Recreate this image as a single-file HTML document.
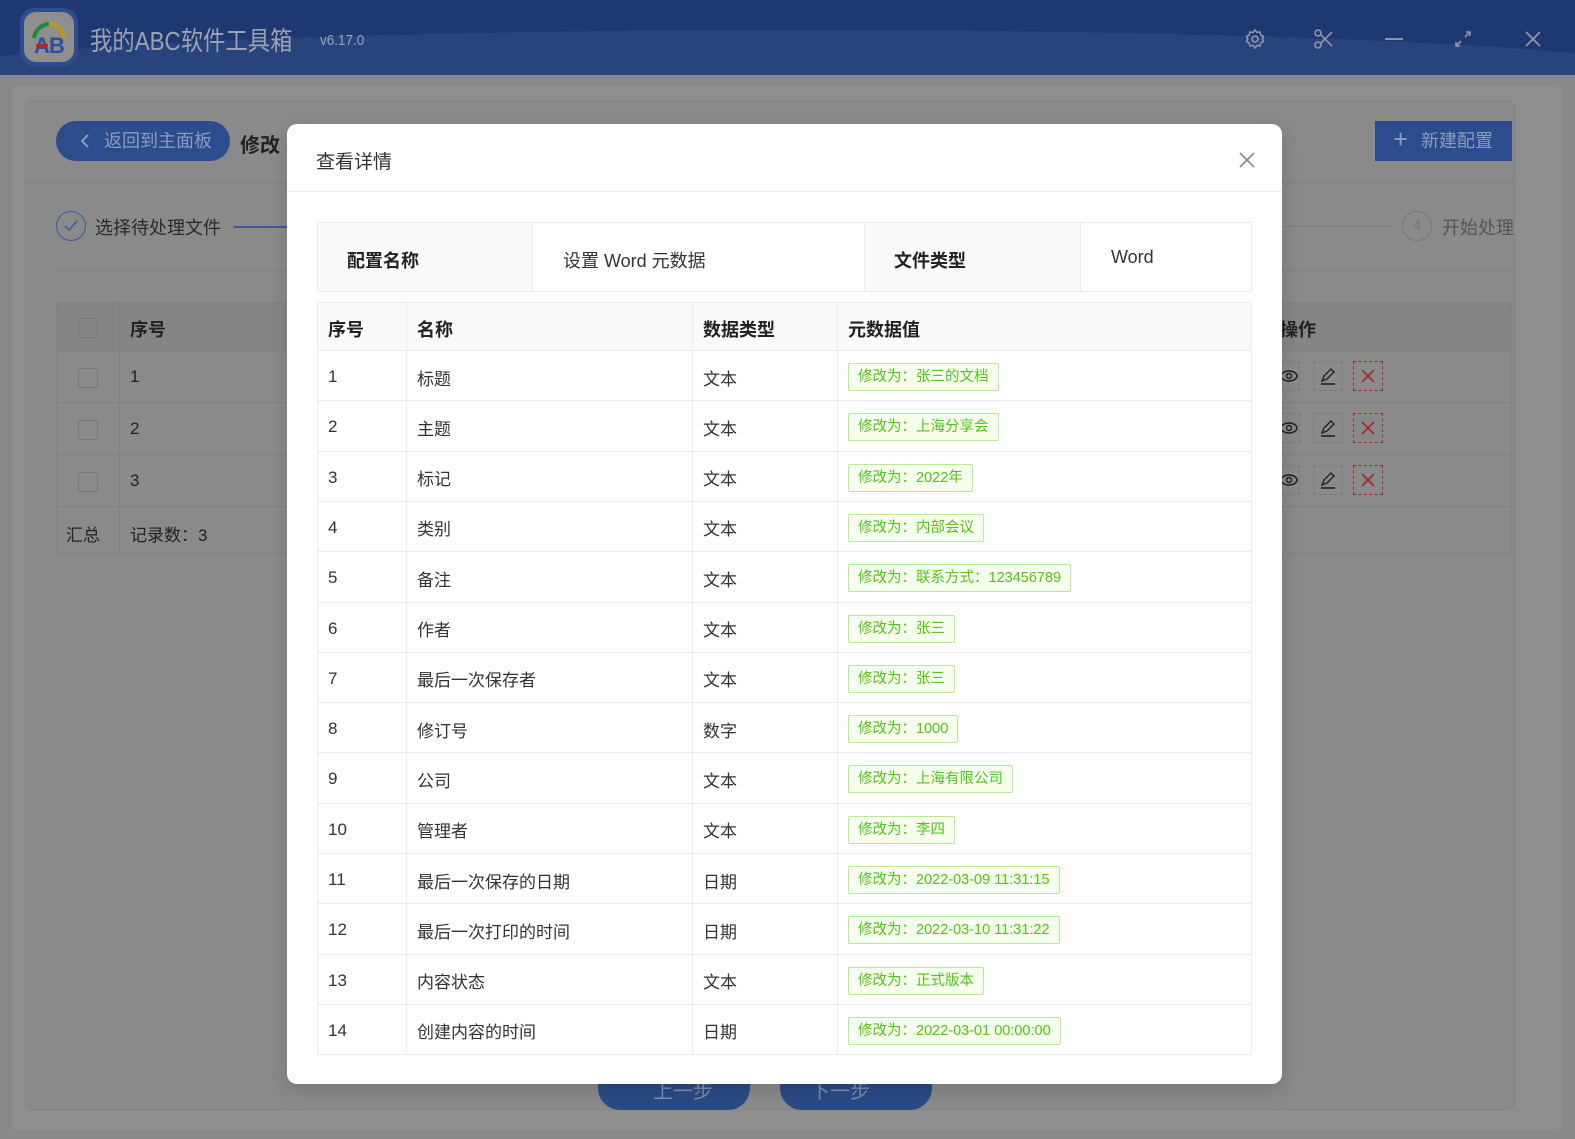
<!DOCTYPE html>
<html><head><meta charset="utf-8">
<style>
*{margin:0;padding:0;box-sizing:border-box}
body{width:1575px;height:1139px;overflow:hidden;background:#898989;font-family:"Liberation Sans","Noto Sans CJK SC",sans-serif;position:relative;color:#333}
.abs{position:absolute}
.top{left:0;top:0;width:1575px;height:75px;background:#1f3872;overflow:hidden}
.wave{left:-50px;top:30px;width:1700px;height:120px;background:#29447d;border-radius:50%/40px}
.t{white-space:nowrap}
.row{position:absolute;left:318px;width:934px;height:51px;border-top:1px solid #ececec}
.cell{position:absolute;top:0;height:100%;display:flex;align-items:center;font-size:17px;color:#333;padding-left:10px;padding-top:2px}
.tag{display:inline-block;height:28px;line-height:27px;padding:0 9px;border:1px solid #b7eb8f;background:#f6ffed;color:#52c41a;font-size:14.5px;border-radius:2px;white-space:nowrap}
.vl{position:absolute;top:302px;height:752px;width:1px;background:#ececec}
</style></head><body>
<div class="abs top">
  <div class="abs wave"></div>
  <div class="abs" style="left:20px;top:8px;width:58px;height:58px;border-radius:14px;background:#2e4d8f"></div>
  <div class="abs" style="left:24px;top:12px;width:50px;height:50px;border-radius:12px;background:#8e8e8e"></div>
  <svg class="abs" style="left:24px;top:12px" width="50" height="50" viewBox="0 0 50 50">
    <path d="M10 26 A16 16 0 0 1 25 12" stroke="#1e8a3a" stroke-width="4" fill="none"/>
    <path d="M25 12 A16 16 0 0 1 40 26" stroke="#b89a1a" stroke-width="4" fill="none"/>
    <text x="10" y="41" font-size="22" font-family="Liberation Sans" fill="#2850a0" font-weight="bold">A</text>
    <text x="25" y="41" font-size="22" font-family="Liberation Sans" fill="#2850a0" font-weight="bold">B</text>
    <rect x="12" y="32" width="12" height="3" fill="#b02828"/>
  </svg>
  <div class="abs t" style="left:90px;top:21px;font-size:26px;color:#9aa3b4;transform:scaleX(0.86);transform-origin:0 0">我的ABC软件工具箱</div>
  <div class="abs t" style="left:320px;top:32px;font-size:15px;color:#9aa3b4;transform:scaleX(0.9);transform-origin:0 0">v6.17.0</div>
  <svg class="abs" style="left:1243px;top:27px" width="24" height="24" viewBox="0 0 24 24" fill="none" stroke="#8d96a8" stroke-width="1.6"><path d="M12 3l2 2.5 3-.5.8 3 2.7 1.5-1.2 2.5 1.2 2.5-2.7 1.5-.8 3-3-.5L12 21l-2-2.5-3 .5-.8-3L3.5 14.5 4.7 12 3.5 9.5 6.2 8 7 5l3 .5z"/><circle cx="12" cy="12" r="3"/></svg>
  <svg class="abs" style="left:1313px;top:28px" width="22" height="22" viewBox="0 0 22 22" fill="none" stroke="#8d96a8" stroke-width="1.6"><circle cx="5" cy="5" r="3"/><circle cx="5" cy="17" r="3"/><path d="M7.5 6.5L19 18M7.5 15.5L19 4"/></svg>
  <div class="abs" style="left:1385px;top:38px;width:18px;height:2px;background:#8d96a8"></div>
  <svg class="abs" style="left:1453px;top:29px" width="20" height="20" viewBox="0 0 20 20" fill="none" stroke="#8d96a8" stroke-width="1.6"><path d="M3 17L8 12M12 8L17 3M13 3h4v4M3 13v4h4"/></svg>
  <svg class="abs" style="left:1523px;top:29px" width="20" height="20" viewBox="0 0 20 20" stroke="#8d96a8" stroke-width="1.8"><path d="M3 3L17 17M17 3L3 17"/></svg>
</div>

<div class="abs" style="left:12px;top:86px;width:1550px;height:1044px;background:#8e8e8e;border-radius:6px"></div>
<div class="abs" style="left:25px;top:100px;width:1490px;height:1010px;background:#8a8a8a;border:1px solid #848484;border-radius:8px"></div>
<div class="abs" style="left:25px;top:182px;width:1490px;height:1px;background:#808080"></div>
<div class="abs t" style="left:56px;top:121px;width:174px;height:40px;border-radius:20px;background:#2c4c8e;color:#8b9ac0;font-size:18px;line-height:40px;padding-left:48px">返回到主面板</div>
<svg class="abs" style="left:78px;top:133px" width="14" height="16"><path d="M10 2L4 8l6 6" stroke="#8b9ac0" stroke-width="2" fill="none"/></svg>
<div class="abs t" style="left:240px;top:129px;font-size:20px;font-weight:bold;color:#222">修改</div>
<div class="abs t" style="left:1375px;top:121px;width:137px;height:40px;background:#2c4c8e;color:#8b9ac0;font-size:18px;line-height:40px;padding-left:46px">新建配置</div>
<div class="abs t" style="left:1393px;top:124px;font-size:26px;color:#8b9ac0">+</div>
<div class="abs" style="left:56px;top:211px;width:30px;height:30px;border:1.5px solid #3a5aa0;border-radius:50%"></div>
<svg class="abs" style="left:62px;top:218px" width="18" height="16"><path d="M3 8l4 4 8-9" stroke="#3a5aa0" stroke-width="1.5" fill="none"/></svg>
<div class="abs t" style="left:95px;top:214px;font-size:18px;color:#2a2a2a">选择待处理文件</div>
<div class="abs" style="left:234px;top:226px;width:55px;height:2px;background:#3a5aa0"></div>
<div class="abs" style="left:1282px;top:226px;width:112px;height:1px;background:#7d7d7d"></div>
<div class="abs" style="left:1402px;top:211px;width:30px;height:30px;border:1.5px solid #777;border-radius:50%;color:#777;text-align:center;line-height:27px;font-size:15px">4</div>
<div class="abs t" style="left:1442px;top:214px;font-size:18px;color:#555">开始处理</div>
<div class="abs" style="left:56px;top:270px;width:1456px;height:1px;background:#808080"></div>
<div class="abs" style="left:56px;top:302px;width:1456px;height:252px;border:1px solid #828282;border-radius:4px"></div>
<div class="abs" style="left:57px;top:303px;width:1454px;height:47px;background:#858585"></div>
<div class="abs" style="left:56px;top:350px;width:1456px;height:1px;background:#808080"></div>
<div class="abs" style="left:56px;top:402px;width:1456px;height:1px;background:#808080"></div>
<div class="abs" style="left:56px;top:454px;width:1456px;height:1px;background:#808080"></div>
<div class="abs" style="left:56px;top:506px;width:1456px;height:1px;background:#808080"></div>
<div class="abs" style="left:119px;top:302px;width:1px;height:252px;background:#808080"></div>
<div class="abs" style="left:78px;top:318px;width:20px;height:20px;border:1px solid #777;border-radius:2px"></div>
<div class="abs" style="left:78px;top:368px;width:20px;height:20px;border:1px solid #777;border-radius:2px"></div>
<div class="abs" style="left:78px;top:420px;width:20px;height:20px;border:1px solid #777;border-radius:2px"></div>
<div class="abs" style="left:78px;top:472px;width:20px;height:20px;border:1px solid #777;border-radius:2px"></div>
<div class="abs t" style="left:130px;top:316px;font-size:18px;font-weight:bold;color:#222">序号</div>
<div class="abs t" style="left:130px;top:367px;font-size:17px;color:#222">1</div>
<div class="abs t" style="left:130px;top:419px;font-size:17px;color:#222">2</div>
<div class="abs t" style="left:130px;top:471px;font-size:17px;color:#222">3</div>
<div class="abs t" style="left:66px;top:521px;font-size:17px;color:#222">汇总</div>
<div class="abs t" style="left:130px;top:521px;font-size:17px;color:#222">记录数：3</div>
<div class="abs t" style="left:1280px;top:316px;font-size:18px;font-weight:bold;color:#222">操作</div>
<div id="ops"></div>
<div class="abs t" style="left:598px;top:1055px;width:152px;height:55px;border-radius:0 0 22px 22px;background:#2b4a85;color:#7d8cb0;font-size:20px;padding:20px 0 0 55px">上一步</div>
<div class="abs t" style="left:780px;top:1055px;width:152px;height:55px;border-radius:0 0 22px 22px;background:#2b4a85;color:#7d8cb0;font-size:20px;padding:20px 0 0 30px">下一步</div>

<div class="abs" style="left:287px;top:124px;width:995px;height:960px;background:#fff;border-radius:10px;box-shadow:0 6px 20px rgba(0,0,0,.15)"></div>
<div class="abs t" style="left:316px;top:147px;font-size:19px;color:#333">查看详情</div>
<svg class="abs" style="left:1238px;top:151px" width="18" height="18"><path d="M2 2L16 16M16 2L2 16" stroke="#888" stroke-width="1.6"/></svg>
<div class="abs" style="left:287px;top:191px;width:995px;height:1px;background:#ececec"></div>

<div class="abs" style="left:317px;top:222px;width:935px;height:70px;border:1px solid #ececec"></div>
<div class="abs" style="left:318px;top:223px;width:215px;height:68px;background:#fafafa;border-right:1px solid #ececec"></div>
<div class="abs" style="left:864px;top:223px;width:217px;height:68px;background:#fafafa;border-left:1px solid #ececec;border-right:1px solid #ececec"></div>
<div class="abs t" style="left:347px;top:247px;font-size:18px;font-weight:bold;color:#222">配置名称</div>
<div class="abs t" style="left:563px;top:247px;font-size:18px;color:#333">设置 Word 元数据</div>
<div class="abs t" style="left:894px;top:247px;font-size:18px;font-weight:bold;color:#222">文件类型</div>
<div class="abs t" style="left:1111px;top:247px;font-size:18px;color:#333">Word</div>

<div class="abs" style="left:317px;top:302px;width:935px;height:753px;border:1px solid #ececec"></div>
<div class="abs" style="left:318px;top:303px;width:933px;height:47px;background:#fafafa"></div>
<div class="vl" style="left:406px"></div>
<div class="vl" style="left:692px"></div>
<div class="vl" style="left:837px"></div>
<div class="abs t" style="left:328px;top:316px;font-size:18px;font-weight:bold;color:#222">序号</div>
<div class="abs t" style="left:417px;top:316px;font-size:18px;font-weight:bold;color:#222">名称</div>
<div class="abs t" style="left:703px;top:316px;font-size:18px;font-weight:bold;color:#222">数据类型</div>
<div class="abs t" style="left:848px;top:316px;font-size:18px;font-weight:bold;color:#222">元数据值</div>
<div id="rows"></div>
<script>
var d=[["标题","文本","张三的文档"],["主题","文本","上海分享会"],["标记","文本","2022年"],["类别","文本","内部会议"],["备注","文本","联系方式：123456789"],["作者","文本","张三"],["最后一次保存者","文本","张三"],["修订号","数字","1000"],["公司","文本","上海有限公司"],["管理者","文本","李四"],["最后一次保存的日期","日期","2022-03-09 11:31:15"],["最后一次打印的时间","日期","2022-03-10 11:31:22"],["内容状态","文本","正式版本"],["创建内容的时间","日期","2022-03-01 00:00:00"]];
var h="";
for(var i=0;i<d.length;i++){var y=350+i*50.3;
h+='<div class="row" style="top:'+y+'px"><div class="cell" style="left:0">'+(i+1)+'</div><div class="cell" style="left:89px">'+d[i][0]+'</div><div class="cell" style="left:375px">'+d[i][1]+'</div><div class="cell" style="left:520px"><span class="tag">修改为：'+d[i][2]+'</span></div></div>';}
document.getElementById("rows").innerHTML=h;
var o="";
for(var j=0;j<3;j++){var y=361+j*52;
o+='<div class="abs" style="left:1282px;top:'+y+'px;width:18px;height:30px;border:1px dashed #777;border-left:none"></div>';
o+='<svg class="abs" style="left:1280px;top:'+(y+7)+'px" width="20" height="16"><ellipse cx="9" cy="8" rx="8" ry="5" fill="none" stroke="#222" stroke-width="1.5"/><circle cx="9" cy="8" r="2.5" fill="none" stroke="#222" stroke-width="1.5"/></svg>';
o+='<div class="abs" style="left:1313px;top:'+y+'px;width:30px;height:30px;border:1px dashed #777"></div>';
o+='<svg class="abs" style="left:1318px;top:'+(y+5)+'px" width="20" height="20"><path d="M4 15l2-5 7-7 3 3-7 7z" fill="none" stroke="#222" stroke-width="1.4"/><path d="M3 18h14" stroke="#222" stroke-width="1.6"/></svg>';
o+='<div class="abs" style="left:1353px;top:'+y+'px;width:30px;height:30px;border:1px dashed #a02a2a"></div>';
o+='<svg class="abs" style="left:1360px;top:'+(y+7)+'px" width="16" height="16"><path d="M2 2L14 14M14 2L2 14" stroke="#a02a2a" stroke-width="1.6"/></svg>';}
document.getElementById("ops").innerHTML=o;
</script>
</body></html>
